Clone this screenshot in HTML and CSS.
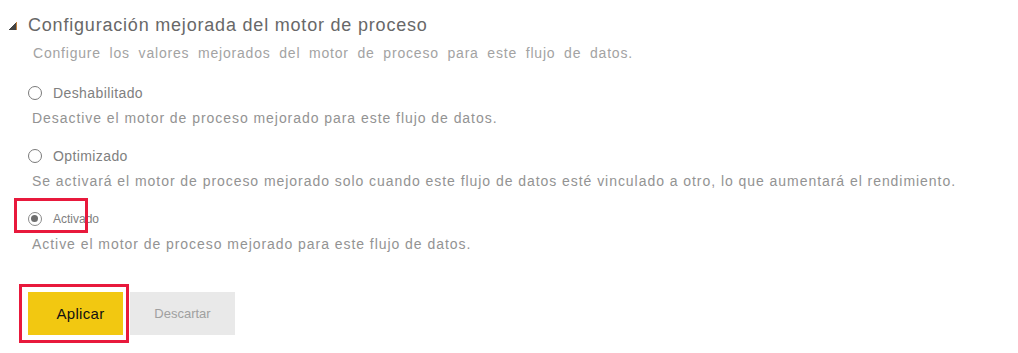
FILE: index.html
```html
<!DOCTYPE html>
<html lang="es">
<head>
<meta charset="UTF-8">
<title>Configuración mejorada del motor de proceso</title>
<link rel="stylesheet" href="styles.css">
</head>
<body>
<div class="panel">
    <header class="section-head">
        <span class="caret"></span>
        <h2>Configuración mejorada del motor de proceso</h2>
    </header>
    <p class="intro">Configure los valores mejorados del motor de proceso para este flujo de datos.</p>

    <div class="option">
        <label class="radio"><span class="dot"></span>Deshabilitado</label>
        <p class="desc">Desactive el motor de proceso mejorado para este flujo de datos.</p>
    </div>
    <div class="option">
        <label class="radio"><span class="dot"></span>Optimizado</label>
        <p class="desc">Se activará el motor de proceso mejorado solo cuando este flujo de datos esté vinculado a otro, lo que aumentará el rendimiento.</p>
    </div>
    <div class="option marked">
        <label class="radio small"><span class="dot checked"></span>Activado</label>
        <span class="highlight"></span>
        <p class="desc">Active el motor de proceso mejorado para este flujo de datos.</p>
    </div>

    <div class="actions">
        <div class="boxed">
            <button class="btn apply">Aplicar</button>
        </div>
        <button class="btn discard">Descartar</button>
    </div>
</div>
</body>
</html>
```

FILE: styles.css
```css
* { margin: 0; padding: 0; box-sizing: border-box; }
body {
    background: #fff;
    font-family: "Liberation Sans", Arial, sans-serif;
    width: 1018px;
    height: 353px;
    overflow: hidden;
}
.panel { padding-top: 13px; }
.section-head {
    display: flex; align-items: center;
    height: 24px;
    padding-left: 9px;
}
.caret {
    width: 8px; height: 8px;
    margin-top: 1px;
    background: linear-gradient(to bottom right, transparent 50%, #444 50%);
    border-right: 1px solid #c08040;
}
.section-head h2 {
    font-size: 18px; font-weight: normal; color: #686868;
    margin-left: 11px;
    line-height: 24px;
    letter-spacing: 0.8px;
}
.intro {
    margin-top: 6px;
    padding-left: 33px;
    font-size: 14px; line-height: 20px;
    color: #a3a3a3;
    letter-spacing: 0.8px;
    word-spacing: 4px;
}
.option { position: relative; margin-top: 20px; }
.option + .option { margin-top: 18px; }
.radio {
    display: flex; align-items: center;
    height: 20px;
    padding-left: 28px;
    font-size: 14px; color: #808080;
    letter-spacing: 0.4px;
}
.radio.small { font-size: 12px; letter-spacing: 0; }
.dot {
    width: 14px; height: 14px;
    border: 1.5px solid #7a7a7a;
    border-radius: 50%;
    margin-right: 11px;
    position: relative;
}
.dot.checked { border-color: #8a8a8a; }
.dot.checked::after {
    content: "";
    position: absolute; top: 2px; left: 2px;
    width: 7px; height: 7px;
    border-radius: 50%;
    background: #6e6e6e;
}
.desc {
    margin-top: 5px;
    padding-left: 32px;
    font-size: 14px; line-height: 20px;
    color: #939393;
    letter-spacing: 0.95px;
}
.highlight {
    position: absolute;
    left: 14px; top: -11px;
    width: 74px; height: 35px;
    border: 3px solid #e8193c;
}
.actions {
    display: flex; align-items: flex-start;
    margin-top: 30px;
    padding-left: 19px;
}
.boxed {
    border: 3px solid #e8193c;
    padding: 5px 3px 5px 6px;
}
.btn {
    border: none;
    height: 43px;
    font-family: inherit;
    cursor: pointer;
}
.apply {
    width: 95px;
    background: #f2c811;
    color: #111;
    font-size: 15px;
    letter-spacing: 0.3px;
    padding-left: 10px;
}
.discard {
    width: 105px;
    margin-top: 8px;
    margin-left: 1px;
    background: #e9e9e9;
    color: #a0a0a0;
    font-size: 13px;
}
```
